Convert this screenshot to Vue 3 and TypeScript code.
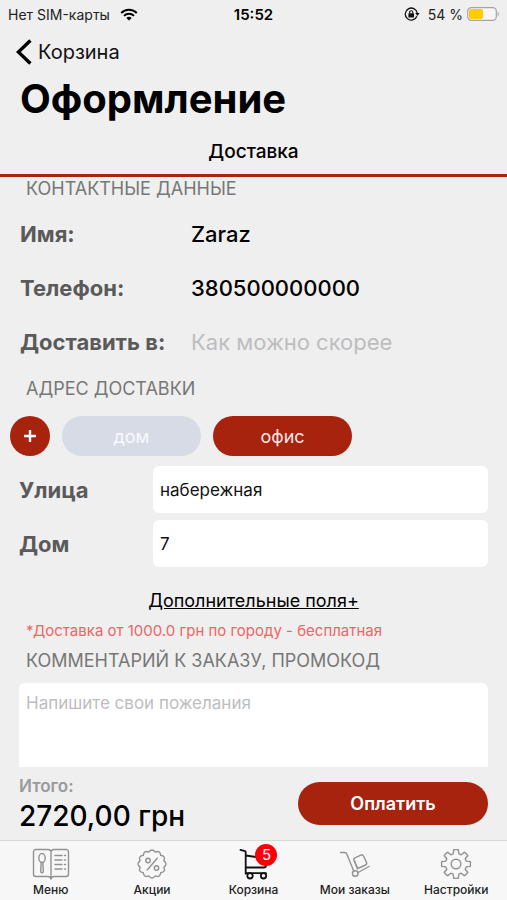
<script setup lang="ts">
import { ref } from 'vue'

interface Tab {
  id: string
  label: string
  active?: boolean
  badge?: number
}

const tabs: Tab[] = [
  { id: 'menu', label: 'Меню' },
  { id: 'offers', label: 'Акции' },
  { id: 'cart', label: 'Корзина', active: true, badge: 5 },
  { id: 'orders', label: 'Мои заказы' },
  { id: 'settings', label: 'Настройки' },
]

const addresses = ['дом', 'офис']
const selected = ref('офис')
const street = ref('набережная')
const house = ref('7')
const when = ref('')
const comment = ref('')

const point = (radius: number, angle: number): string =>
  `${(16 + radius * Math.cos(angle)).toFixed(2)} ${(16 + radius * Math.sin(angle)).toFixed(2)}`

// Cog outline with eight teeth around the centre of a 32-unit box
function cogPath(): string {
  const parts: string[] = []
  for (let i = 0; i < 8; i++) {
    const a = (i * Math.PI) / 4
    parts.push(point(10.6, a - 0.27), point(14.6, a - 0.16), point(14.6, a + 0.16), point(10.6, a + 0.27))
  }
  return `M${parts.join('L')}Z`
}

// Scalloped outline of the discount badge
function scallopPath(): string {
  const count = 12
  const step = (Math.PI * 2) / count
  let d = `M${point(12.3, -step / 2)}`
  for (let i = 0; i < count; i++) {
    d += `Q${point(16.2, i * step)} ${point(12.3, (i + 0.5) * step)}`
  }
  return `${d}Z`
}

const cog = cogPath()
const scallop = scallopPath()
</script>

<template>
  <div class="screen">
    <div class="status">
      <div class="status-side">
        <span>Нет SIM-карты</span>
        <svg class="wifi" viewBox="0 0 18 13" aria-hidden="true">
          <path d="M1.2 5a11 11 0 0 1 15.6 0M4 7.9a7 7 0 0 1 10 0" fill="none" stroke="#000" stroke-width="2" />
          <path d="M6.3 10a3.8 3.8 0 0 1 5.4 0L9 12.6z" fill="#000" />
        </svg>
      </div>
      <strong class="clock">15:52</strong>
      <div class="status-side end">
        <svg class="lock" viewBox="0 0 16 14" aria-hidden="true">
          <path d="M12.9 9.2A6 6 0 1 1 13.2 6" fill="none" stroke="#111" stroke-width="1.3" />
          <path d="M11.2 6h4.4l-2.2 3z" fill="#111" />
          <rect x="4.4" y="6.3" width="5.6" height="4.2" rx=".6" fill="#111" />
          <path d="M5.6 6.6V5.3a1.6 1.6 0 0 1 3.2 0v1.3" fill="none" stroke="#111" stroke-width="1.1" />
        </svg>
        <span class="charge">54 %</span>
        <svg class="battery" viewBox="0 0 32 14" aria-hidden="true">
          <rect x=".7" y=".7" width="28.6" height="12.6" rx="3.6" fill="#f6f6f6" stroke="#a5a5a8" stroke-width="1.2" />
          <rect x="2" y="2" width="14" height="10" rx="2" fill="#fc0" />
          <path d="M30.6 4.7c1.5.7 1.5 3.9 0 4.6z" fill="#a5a5a8" />
        </svg>
      </div>
    </div>

    <header>
      <a href="#cart" class="back">
        <svg viewBox="0 0 16 26" aria-hidden="true">
          <path d="M14.4 1.6 2.4 13l12 11.4" fill="none" stroke="#000" stroke-width="3.4" />
        </svg>
        <span>Корзина</span>
      </a>
      <h1>Оформление</h1>
      <div class="mode"><button type="button">Доставка</button></div>
    </header>

    <main>
      <h2 class="first">КОНТАКТНЫЕ ДАННЫЕ</h2>
      <dl>
        <div class="row"><dt>Имя:</dt><dd>Zaraz</dd></div>
        <div class="row"><dt>Телефон:</dt><dd>380500000000</dd></div>
        <div class="row">
          <dt><label for="when">Доставить в:</label></dt>
          <dd><input id="when" v-model="when" class="plain" placeholder="Как можно скорее" /></dd>
        </div>
      </dl>

      <h2>АДРЕС ДОСТАВКИ</h2>
      <div class="chips">
        <button type="button" class="add" aria-label="Добавить адрес">
          <svg viewBox="0 0 12 12" aria-hidden="true"><path d="M6 0v12M0 6h12" stroke="#fff" stroke-width="2.4" /></svg>
        </button>
        <button
          v-for="name in addresses"
          :key="name"
          type="button"
          class="chip"
          :class="{ on: selected === name }"
          @click="selected = name"
        >{{ name }}</button>
      </div>

      <div class="fields">
        <label for="street">Улица</label>
        <input id="street" v-model="street" type="text" />
        <label for="house">Дом</label>
        <input id="house" v-model="house" type="text" />
      </div>

      <div class="more"><a href="#more">Дополнительные поля+</a></div>
      <p class="note">*Доставка от 1000.0 грн по городу - бесплатная</p>
      <h2><label for="comment">КОММЕНТАРИЙ К ЗАКАЗУ, ПРОМОКОД</label></h2>
      <textarea id="comment" v-model="comment" placeholder="Напишите свои пожелания"></textarea>
    </main>

    <section class="summary">
      <div>
        <div class="total-label">Итого:</div>
        <div class="total">2720,00 грн</div>
      </div>
      <button type="button" class="pay">Оплатить</button>
    </section>

    <nav>
      <a v-for="tab in tabs" :key="tab.id" :href="'#' + tab.id" :class="{ active: tab.active }">
        <span class="glyph">
          <svg v-if="tab.id === 'menu'" class="wide" viewBox="0 0 38 32" aria-hidden="true">
            <path d="M19 3.5C18.5 2 17.5 1.5 16 1.5H4Q1.5 1.5 1.5 4v22q0 2.500 2.500 2.500h12c1.500 0 2.500.5 3 2.500.5-2 1.500-2.500 3-2.500h12q2.500 0 2.500-2.500V4q0-2.500-2.500-2.500H22c-1.500 0-2.500.5-3 2zM19 3.500V30" />
            <ellipse cx="10" cy="10" rx="3.200" ry="4.500" />
            <path d="M9.200 14.500 8.700 23q0 1.800 1.300 1.800t1.300-1.800l-.5-8.500" />
            <path d="M23 7.500h7M23 12h7M23 16.500h7M23 21h7M32.500 7.500h1M32.500 12h1M32.500 16.500h1M32.500 21h1" />
          </svg>
          <svg v-else-if="tab.id === 'offers'" viewBox="0 0 32 32" aria-hidden="true">
            <path :d="scallop" />
            <circle cx="12" cy="12.500" r="2.200" />
            <circle cx="20.500" cy="20" r="2.200" />
            <path d="m21.200 10.200-10 11.800" />
          </svg>
          <svg v-else-if="tab.id === 'cart'" viewBox="-2 0 32 32" aria-hidden="true">
            <path d="M1.500 1.800 6 3.200q.7.300.7 1v21.500M6.700 7.500l20.500 3v6.500q0 2.500-2.500 2.500h-18M6.700 25.200H27" />
            <circle cx="11" cy="27.800" r="2.700" />
            <circle cx="24.500" cy="27.800" r="2.700" />
          </svg>
          <svg v-else-if="tab.id === 'orders'" viewBox="0 0 32 32" aria-hidden="true">
            <path d="M1.500 4.500H6q1.200 0 1.700 1.200l7 17.300M19 24.500l11-6" />
            <rect x="16" y="8" width="10.500" height="11" rx="2" transform="rotate(-25 21 13.500)" />
            <path d="m15.500 13 3 8" />
            <circle cx="16.200" cy="25.500" r="2.800" />
          </svg>
          <svg v-else viewBox="0 0 32 32" aria-hidden="true">
            <path :d="cog" />
            <circle cx="16" cy="16" r="4.800" />
          </svg>
          <span v-if="tab.badge" class="badge">{{ tab.badge }}</span>
        </span>
        <span>{{ tab.label }}</span>
      </a>
    </nav>
  </div>
</template>

<style>
body {
  margin: 0;
  background: #efefef;
}
</style>

<style scoped>
.screen {
  display: flex;
  flex-direction: column;
  min-height: 100vh;
  background: #efefef;
  color: #000;
  font-family: Inter, "Liberation Sans", sans-serif;
}
.screen * {
  box-sizing: border-box;
}
button, input, textarea {
  font: inherit;
  color: inherit;
  border: 0;
  padding: 0;
  margin: 0;
  background: none;
}
a {
  color: inherit;
  text-decoration: none;
}
svg {
  display: block;
}
.status {
  display: grid;
  grid-template-columns: 1fr auto 1fr;
  align-items: center;
  height: 28px;
  padding: 0 8px;
  font-size: 14px;
  color: #222;
}
.status-side {
  display: flex;
  align-items: center;
  gap: 10px;
}
.end {
  justify-content: flex-end;
  gap: 4px;
}
.clock {
  font-size: 15px;
  font-weight: 600;
  color: #000;
}
.wifi {
  width: 18px;
  height: 13px;
}
.lock {
  width: 16px;
  height: 14px;
}
.charge {
  margin-left: 4px;
}
.battery {
  width: 32px;
  height: 14px;
}
header {
  border-bottom: 3px solid #a8230e;
}
.back {
  display: flex;
  width: fit-content;
  align-items: center;
  gap: 6px;
  height: 48px;
  padding: 0 16px;
  font-size: 20px;
  color: #111;
}
.back svg {
  width: 16px;
  height: 26px;
}
h1 {
  margin: 0;
  padding: 0 20px;
  font-size: 40px;
  line-height: 46px;
  font-weight: 700;
}
.mode {
  display: flex;
  justify-content: center;
  align-items: center;
  height: 52px;
  padding-top: 6px;
  font-size: 19px;
  font-weight: 500;
}
main {
  flex: 1;
  display: flex;
  flex-direction: column;
}
h2 {
  margin: 0;
  padding: 0 26px;
  font-size: 18px;
  line-height: 24px;
  font-weight: 400;
  color: #777;
}
dl {
  margin: 6px 0 8px;
  padding: 0 20px;
}
.row {
  display: grid;
  grid-template-columns: 171px 1fr;
  align-items: center;
  height: 54px;
}
dt, .fields label {
  font-size: 22px;
  font-weight: 700;
  color: #5a5a5a;
}
dd {
  margin: 0;
  font-size: 22px;
  font-weight: 500;
}
.plain {
  width: 100%;
  font-weight: 400;
}
::placeholder {
  color: #bdbdbf;
  opacity: 1;
}
.chips {
  display: flex;
  gap: 12px;
  padding: 15px 10px 10px;
}
.chips button {
  height: 40px;
  border-radius: 20px;
}
.add {
  display: grid;
  place-items: center;
  width: 40px;
  background: #a8230e;
}
.add svg {
  width: 12px;
  height: 12px;
}
.chip {
  width: 139px;
  background: #d6dbe6;
  color: #f8f9fc;
  font-size: 18px;
}
.chip.on {
  background: #a8230e;
  color: #fbe9e6;
}
.fields {
  display: grid;
  grid-template-columns: 134px 1fr;
  align-items: center;
  gap: 7px 0;
  padding: 0 19px;
}
.fields input {
  height: 47px;
  min-width: 0;
  padding: 0 7px;
  border-radius: 6px;
  background: #fff;
  font-size: 17px;
  color: #111;
}
.more {
  display: flex;
  justify-content: center;
  padding-top: 23px;
  font-size: 18px;
  line-height: 22px;
}
.more a {
  text-decoration: underline;
}
.note {
  margin: 0;
  padding: 9px 26px 8px;
  font-size: 15px;
  line-height: 20px;
  color: #ef6464;
}
textarea {
  display: block;
  height: 84px;
  margin: 10px 19px 0;
  padding: 9px 7px;
  border-radius: 6px 6px 0 0;
  background: #fff;
  font-size: 17px;
  line-height: 22px;
  resize: none;
}
.summary {
  display: flex;
  justify-content: space-between;
  align-items: center;
  height: 73px;
  padding: 0 19px;
}
.total-label {
  padding-top: 2px;
  font-size: 17px;
  line-height: 22px;
  font-weight: 600;
  color: #9a9a9a;
}
.total {
  font-size: 28px;
  line-height: 38px;
  font-weight: 500;
}
.pay {
  width: 190px;
  height: 43px;
  border-radius: 22px;
  background: #a8230e;
  color: #fff;
  font-size: 18px;
  font-weight: 600;
}
nav {
  display: grid;
  grid-template-columns: repeat(5, 1fr);
  height: 60px;
  border-top: 1px solid #d9d9d9;
  background: #f7f7f7;
}
nav a {
  display: flex;
  flex-direction: column;
  align-items: center;
  gap: 2px;
  padding-top: 7px;
  font-size: 12px;
  line-height: 16px;
  font-weight: 500;
  color: #222;
  white-space: nowrap;
}
.glyph {
  position: relative;
}
.glyph svg {
  width: 32px;
  height: 32px;
  fill: none;
  stroke: #929292;
  stroke-width: 1.4;
  stroke-linejoin: round;
  stroke-linecap: round;
}
.glyph .wide {
  width: 38px;
}
.active .glyph svg {
  stroke: #111;
  stroke-width: 1.8;
}
.badge {
  position: absolute;
  top: -4px;
  right: -8px;
  width: 22px;
  height: 22px;
  border-radius: 50%;
  background: #fb0007;
  color: #fff;
  font-size: 15px;
  font-weight: 400;
  line-height: 22px;
  text-align: center;
}
</style>
